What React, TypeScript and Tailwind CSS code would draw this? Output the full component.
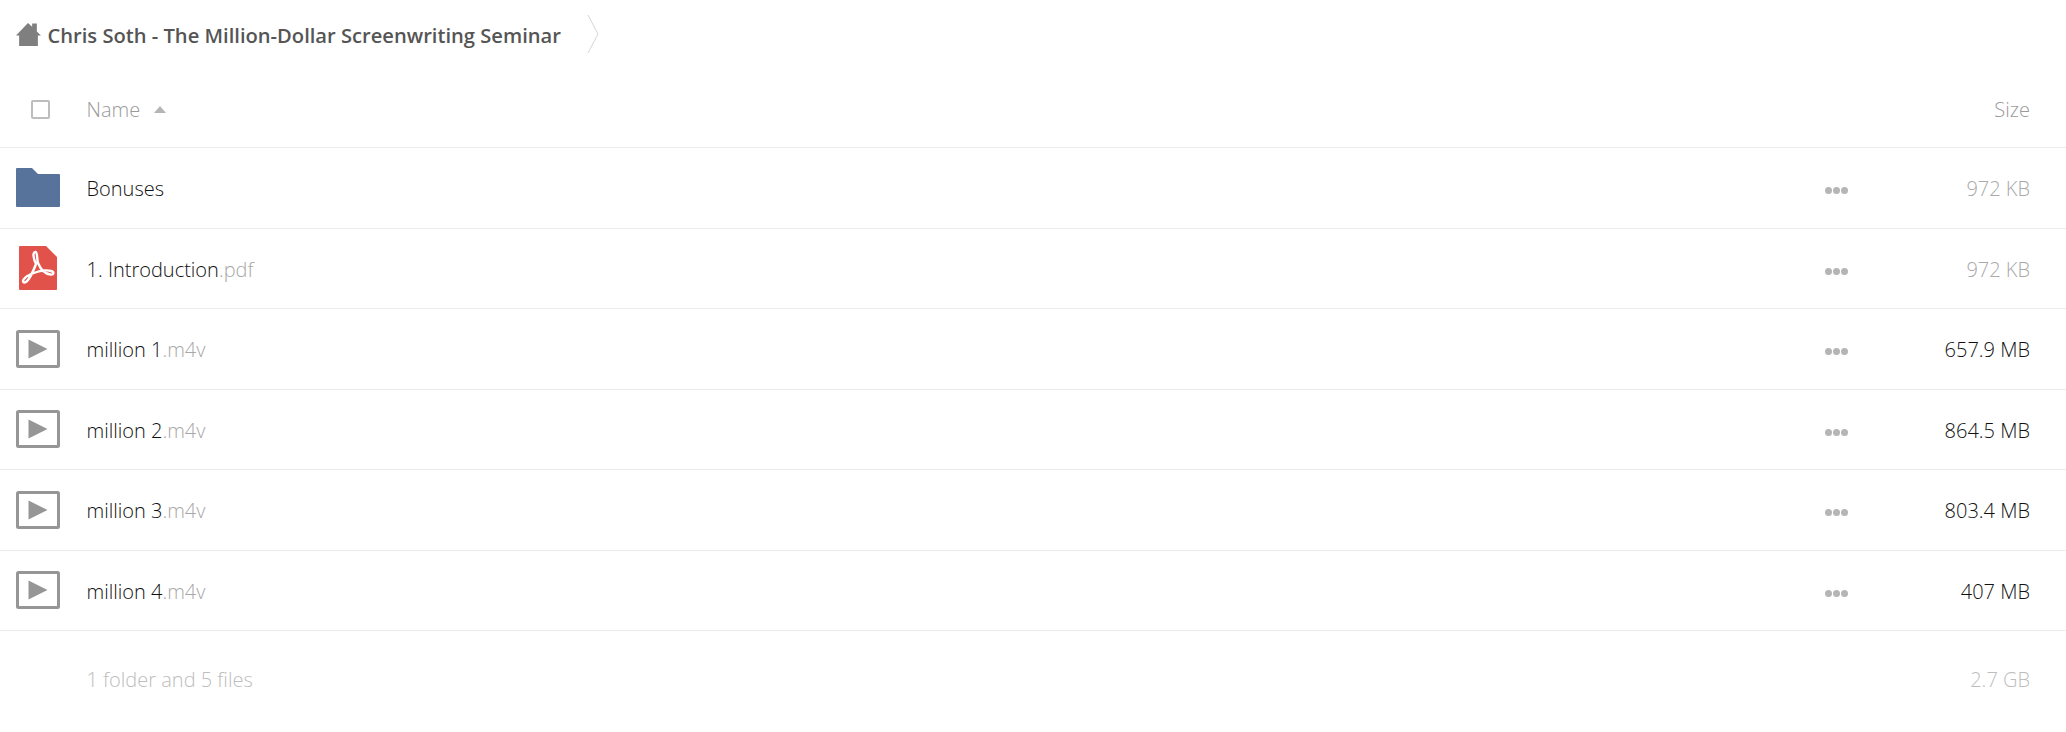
const font = { fontFamily: '"Open Sans", sans-serif' };

function Folder() {
  return (
    <svg width="44" height="39" viewBox="0 0 44 39" className="block">
      <path d="M1 0H16L22 6H43a1 1 0 0 1 1 1V38a1 1 0 0 1-1 1H1a1 1 0 0 1-1-1V1a1 1 0 0 1 1-1Z" fill="#57739c" />
    </svg>
  );
}

function Pdf() {
  return (
    <svg width="38" height="44" viewBox="0 0 38 44" className="block">
      <path d="M1 0H27L38 11V43a1 1 0 0 1-1 1H1a1 1 0 0 1-1-1V1a1 1 0 0 1 1-1Z" fill="#e0524a" />
      <path
        d="M16.500 6C13.500 6 14 12 17 18C14 26 9 36 5.500 36.500C2 36.500 5 31 11 28.500C18 25.500 27 23.500 32 25C35.500 26 35 29 31.500 28.500C26 28 21.500 23 19 17C17.800 13 18.500 6 16.500 6Z"
        fill="none"
        stroke="#fff"
        strokeWidth="2.4"
        strokeLinejoin="round"
      />
    </svg>
  );
}

function Video() {
  return (
    <svg width="44" height="38" viewBox="0 0 44 38" className="block">
      <rect x="1.500" y="1.500" width="41" height="35" rx="1" fill="#fff" stroke="#969696" strokeWidth="3" />
      <path d="M12.500 9.500 31.500 19 12.500 28.500Z" fill="#969696" />
    </svg>
  );
}

type Row = { icon: "folder" | "pdf" | "video"; name: string; ext?: string; size: string; dim?: boolean };

const rows: Row[] = [
  { icon: "folder", name: "Bonuses", size: "972 KB", dim: true },
  { icon: "pdf", name: "1. Introduction", ext: ".pdf", size: "972 KB", dim: true },
  { icon: "video", name: "million 1", ext: ".m4v", size: "657.9 MB" },
  { icon: "video", name: "million 2", ext: ".m4v", size: "864.5 MB" },
  { icon: "video", name: "million 3", ext: ".m4v", size: "803.4 MB" },
  { icon: "video", name: "million 4", ext: ".m4v", size: "407 MB" },
];

function Dots() {
  return (
    <div className="flex gap-[1px]">
      <span className="w-[7px] h-[7px] rounded-full bg-[#b5b5b5]" />
      <span className="w-[7px] h-[7px] rounded-full bg-[#b5b5b5]" />
      <span className="w-[7px] h-[7px] rounded-full bg-[#b5b5b5]" />
    </div>
  );
}

export default function App() {
  return (
    <div className="w-[2066px] h-[732px] bg-white overflow-hidden" style={font}>
      <div className="h-[70px] flex items-center pl-[16px]">
        <svg width="25" height="23" viewBox="0 0 24 22" className="block shrink-0 mt-[-1px]">
          <path d="M11.500 0 15.500 3.500V.5H20V8L24 12H21V22H3V12H0Z" fill="#7f7f7f" />
        </svg>
        <span className="ml-[6.500px] text-[20.150px] font-semibold text-[#555] whitespace-nowrap">
          Chris Soth - The Million-Dollar Screenwriting Seminar
        </span>
        <svg width="12" height="40" viewBox="0 0 12 40" className="block ml-[26px] shrink-0 mt-[-2px]">
          <path d="M1 1 11 20 1 39" fill="none" stroke="#d6d6d6" strokeWidth="1" />
        </svg>
      </div>
      <div className="h-[78px] pt-[2px] flex items-center border-b border-[#ececec]">
        <div className="w-[86.500px] shrink-0 pl-[31px]">
          <div className="w-[19px] h-[19px] border-2 border-[#bdbdbd] rounded-[2px]" />
        </div>
        <span className="text-[20px] font-light text-[#9a9a9a]">Name</span>
        <span className="ml-[14px] w-0 h-0 border-x-[6.500px] border-x-transparent border-b-[7px] border-b-[#b5b5b5]" />
        <span className="ml-auto mr-[36px] text-[20px] font-light text-[#9a9a9a]">Size</span>
      </div>
      {rows.map((r) => (
        <div key={r.name} className="h-[80.5px] flex items-center border-b border-[#ececec]">
          <div className="w-[86.500px] shrink-0 flex items-center">
            {r.icon === "folder" && <div className="ml-[16px]"><Folder /></div>}
            {r.icon === "pdf" && <div className="ml-[19px]"><Pdf /></div>}
            {r.icon === "video" && <div className="ml-[16px]"><Video /></div>}
          </div>
          <div className="mt-[3px] text-[20px] font-light text-[#111] whitespace-nowrap">
            {r.name}
            {r.ext && <span className="text-[#a8a8a8]">{r.ext}</span>}
          </div>
          <div className="ml-auto w-[23px] flex justify-center mt-[6px]">
            <Dots />
          </div>
          <div className={`mt-[3px] w-[218px] pr-[36px] text-right text-[20px] font-light ${r.dim ? "text-[#a8a8a8]" : "text-[#111]"}`}>
            {r.size}
          </div>
        </div>
      ))}
      <div className="h-[97px] flex items-center pl-[86.500px] text-[20px] font-light text-[#bdbdbd]">
        <span>1 folder and 5 files</span>
        <span className="ml-auto mr-[36px]">2.7 GB</span>
      </div>
    </div>
  );
}
